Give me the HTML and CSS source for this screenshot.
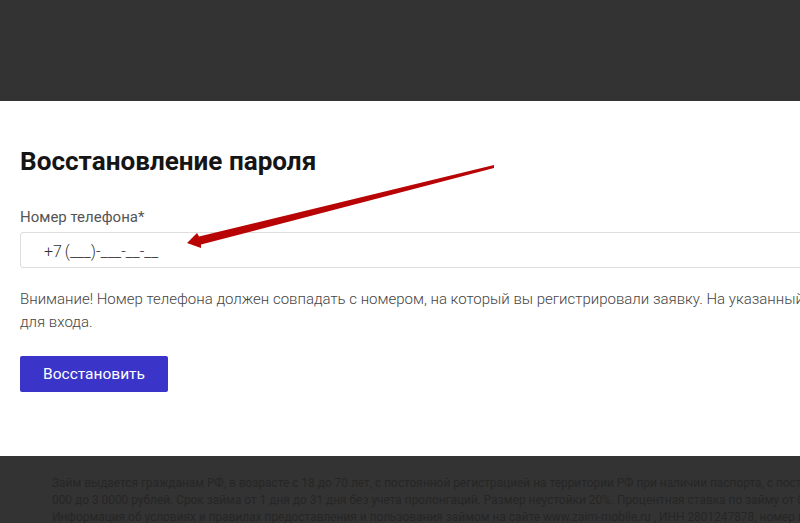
FILE: index.html
```html
<!DOCTYPE html>
<html lang="ru">
<head>
  <meta charset="UTF-8">
  <meta name="viewport" content="width=device-width, initial-scale=1.0">
  <title>Восстановление пароля</title>
  <link rel="stylesheet" href="styles.css">
</head>
<body>
  <div class="page">
    <div class="overlay-top"></div>

    <div class="modal">
      <h1>Восстановление пароля</h1>
      <label for="phone">Номер телефона*</label>
      <input type="text" id="phone" value="+7 (___)-___-__-__">
      <p class="notice">Внимание! Номер телефона должен совпадать с номером, на который вы регистрировали заявку. На указанный номер будет отправлен новый пароль<br>для входа.</p>
      <button class="restore-button">Восстановить</button>
    </div>

    <div class="footer">
      <p>Займ выдается гражданам РФ, в возрасте с 18 до 70 лет, с постоянной регистрацией на территории РФ при наличии паспорта, с постоянным доходом. Сумма займа от 1<br>000 до 3 0000 рублей. Срок займа от 1 дня до 31 дня без учета пролонгаций. Размер неустойки 20%. Процентная ставка по займу от 0,5% в день.<br>Информация об условиях и правилах предоставления и пользования займом на сайте www.zaim-mobile.ru , ИНН 2801247878, номер в реестре</p>
    </div>

    <svg class="arrow" width="800" height="523" viewBox="0 0 800 523">
      <path d="M494 165 L494 168 L201 244.5 L201 248 L187 243 L197 233 L199 236.5 Z" fill="#b90405"/>
    </svg>
  </div>
</body>
</html>
```

FILE: styles.css
```css
body {
  margin: 0;
  padding: 0;
  font-family: Roboto, "Liberation Sans", sans-serif;
  background: #333;
}
.page {
  position: relative;
  width: 800px;
  height: 523px;
  overflow: hidden;
}
.overlay-top {
  height: 101px;
  background: #333;
}
.modal {
  width: 1300px;
  height: 355px;
  box-sizing: border-box;
  padding: 44px 20px 0;
  background: #fff;
}
h1 {
  margin: 0 0 31px;
  font-size: 26.1px;
  line-height: 32px;
  font-weight: 700;
  color: #151515;
}
label {
  display: block;
  margin-bottom: 6px;
  font-size: 15px;
  line-height: 18px;
  color: #555;
}
input {
  display: block;
  width: 100%;
  height: 36px;
  box-sizing: border-box;
  padding: 3px 23px 0;
  font-family: inherit;
  font-size: 16px;
  font-weight: 300;
  word-spacing: -1px;
  color: #333;
  background: #fff;
  border: 1px solid #ddd;
  border-radius: 3px;
}
.notice {
  margin: 20px 0 22px;
  font-size: 15px;
  line-height: 23px;
  font-weight: 300;
  color: #444;
}
.restore-button {
  display: block;
  width: 148px;
  height: 36px;
  padding: 0;
  font-family: inherit;
  font-size: 15.5px;
  color: #fff;
  background: #3a35c8;
  border: none;
  border-radius: 2px;
}
.footer {
  width: 1300px;
  padding: 19px 52px 0;
  box-sizing: border-box;
}
.footer p {
  margin: 0;
  font-size: 11.9px;
  line-height: 17px;
  color: #262626;
}
.arrow {
  position: absolute;
  top: 0;
  left: 0;
}
```
